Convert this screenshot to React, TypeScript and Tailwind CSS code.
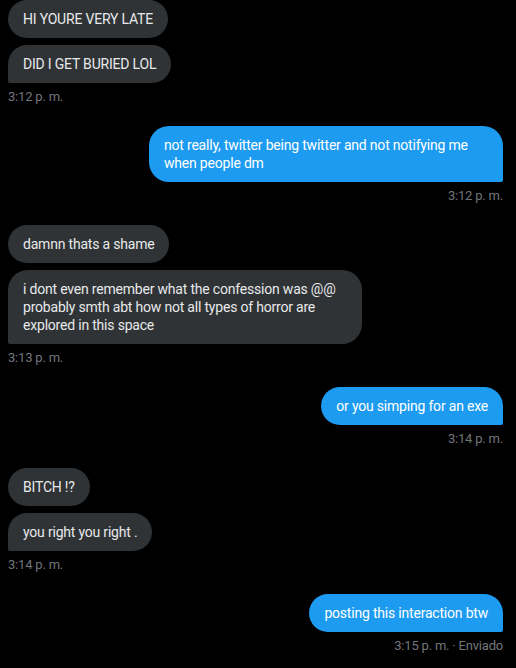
import React from "react";

const font = { fontFamily: "Roboto, 'Liberation Sans', sans-serif" };

function Group({ msgs, time, sent }: { msgs: string[]; time: string; sent?: boolean }) {
  return (
    <div className={"flex flex-col " + (sent ? "items-end" : "items-start")}>
      <div className={"flex flex-col gap-[7px] " + (sent ? "items-end" : "items-start")}>
        {msgs.map((m, i) => (
          <div
            key={i}
            className={
              "max-w-[354px] text-[14px] tracking-[-0.2px] leading-[18px] px-[15px] py-[10px] rounded-[20px] " +
              (sent ? "bg-[#1d9bf0] text-white " : "bg-[#2f3336] text-[#e7e9ea] ") +
              (i === msgs.length - 1 ? (sent ? "rounded-br-[2px]" : "rounded-bl-[2px]") : "")
            }
          >
            {m}
          </div>
        ))}
      </div>
      <div className="mt-[6px] text-[13px] tracking-[-0.2px] leading-4 text-[#71767b]">{time}</div>
    </div>
  );
}

export default function App() {
  return (
    <div className="w-[516px] h-[668px] bg-black overflow-hidden" style={font}>
      <div className="flex flex-col gap-[21px] pl-2 pr-[13px]">
        <Group msgs={["HI YOURE VERY LATE", "DID I GET BURIED LOL"]} time="3:12 p. m." />
        <Group
          sent
          msgs={["not really, twitter being twitter and not notifying me when people dm"]}
          time="3:12 p. m."
        />
        <Group
          msgs={[
            "damnn thats a shame",
            "i dont even remember what the confession was @@ probably smth abt how not all types of horror are explored in this space",
          ]}
          time="3:13 p. m."
        />
        <Group sent msgs={["or you simping for an exe"]} time="3:14 p. m." />
        <Group msgs={["BITCH !?", "you right you right ."]} time="3:14 p. m." />
        <Group sent msgs={["posting this interaction btw"]} time="3:15 p. m. · Enviado" />
      </div>
    </div>
  );
}
